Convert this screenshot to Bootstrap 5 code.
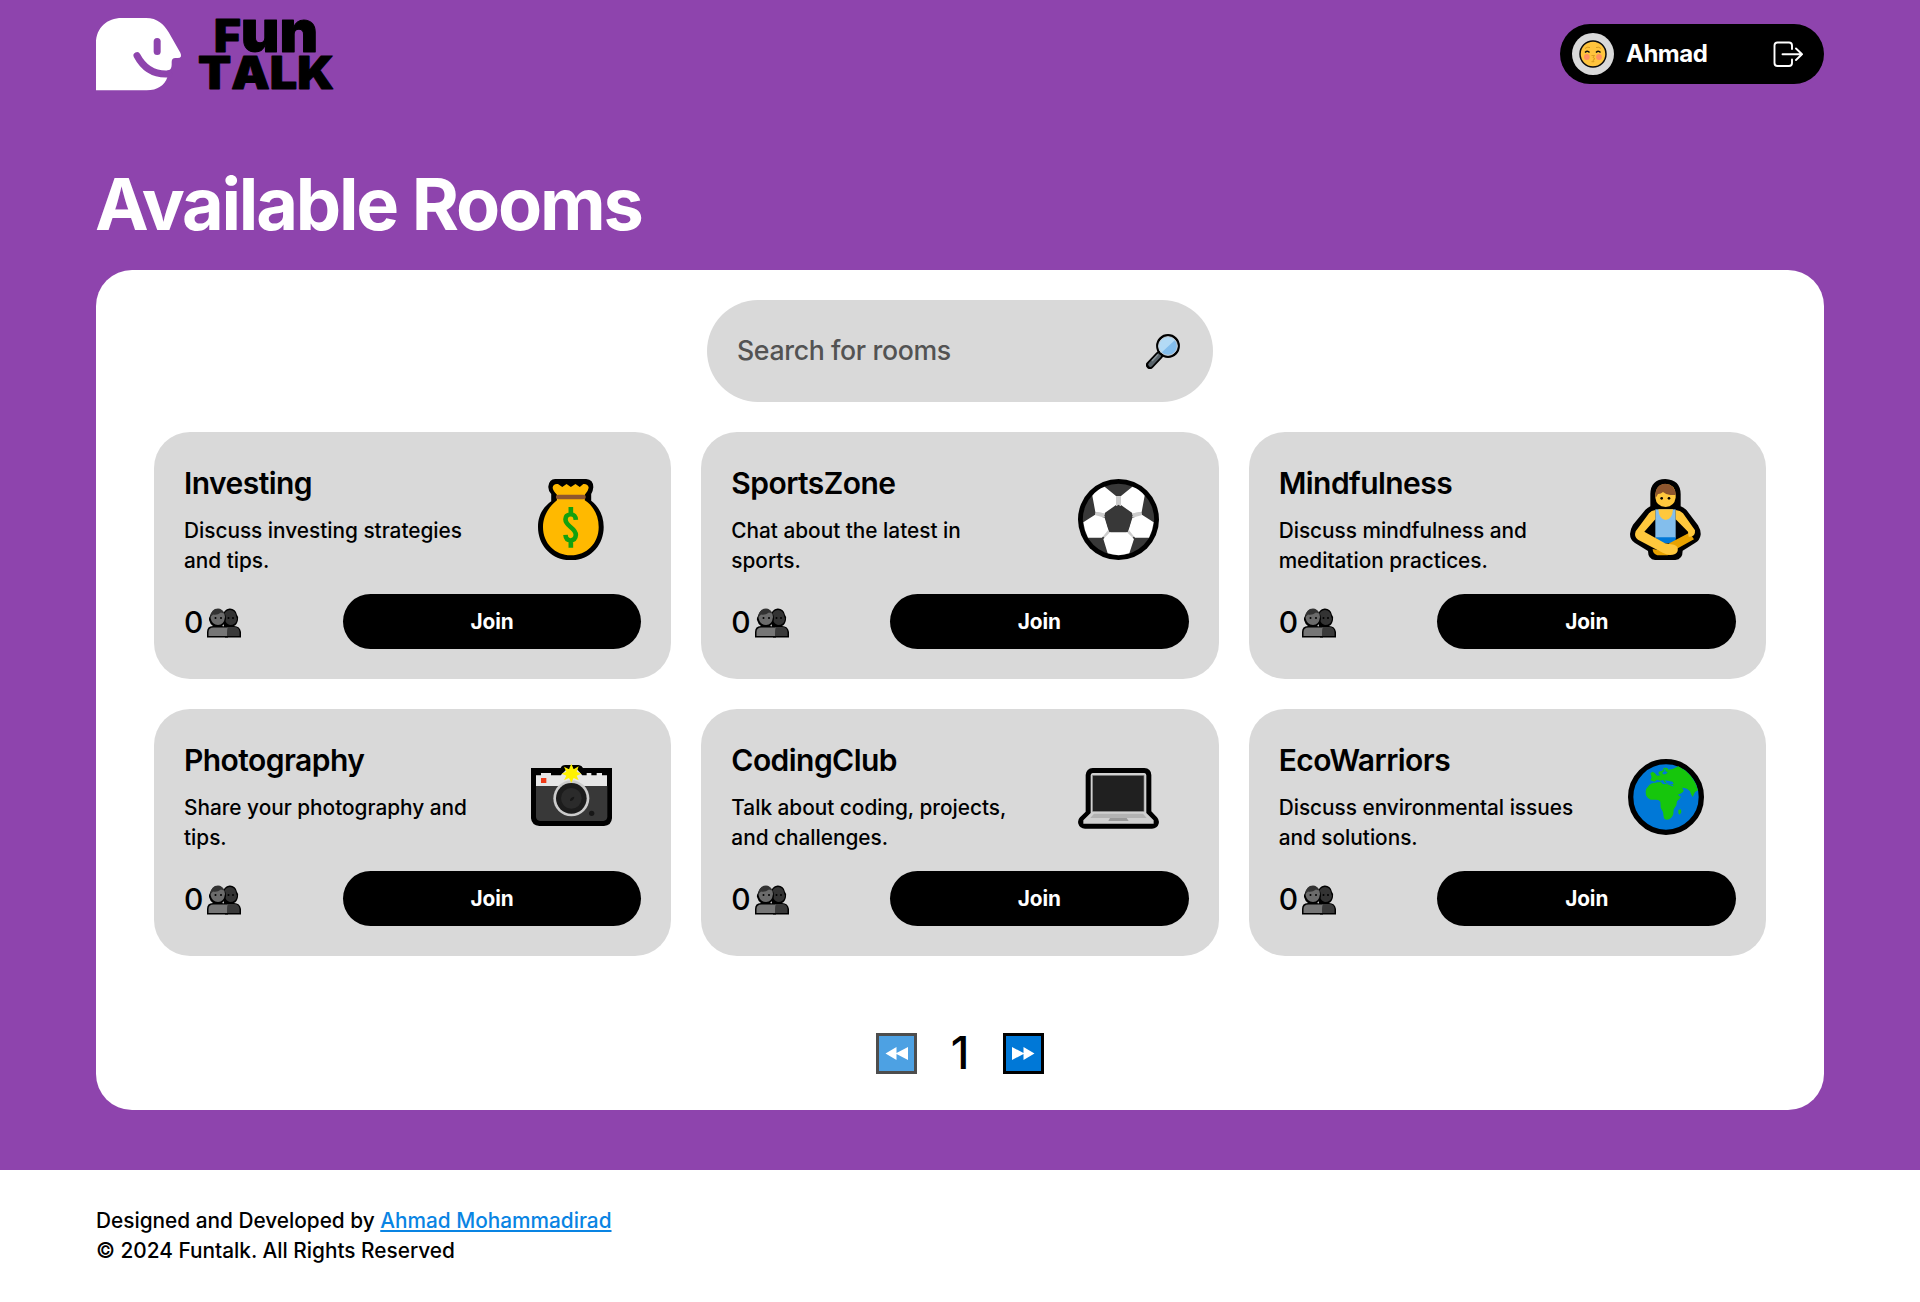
<!DOCTYPE html>
<html lang="en">
<head>
<meta charset="utf-8">
<meta name="viewport" content="width=device-width, initial-scale=1">
<title>Funtalk</title>
<link href="https://cdn.jsdelivr.net/npm/bootstrap@5.3.0/dist/css/bootstrap.min.css" rel="stylesheet">
<style>
body{font-family:Inter,"Liberation Sans",sans-serif;font-size:20.8px;font-weight:500;line-height:30px;color:#000;background:#fff}
.wrap{width:90%;margin:0 auto}
.stage{background:#8e44ad;height:1170px}
.topbar{height:108px}
.userpill{width:264px;height:60px;background:#000;color:#fff;padding:0 21px 0 12px;font-size:24px;font-weight:700;letter-spacing:-.5px}
.avatar{width:42px;height:42px;background:#d9d9d9}
.page-title{font-size:72px;font-weight:700;line-height:108px;color:#fff;margin:42px 0 12px;letter-spacing:-2.2px;text-indent:-1px}
.panel{height:840px;background:#fff;border-radius:36px;padding:30px 58px}
.searchbox{width:506px;height:101.67px;border-radius:51px;background:#d9d9d9;padding:0 33px 0 30px;margin:0 auto 30px}
.searchbox input{font-size:26.67px;font-weight:500;color:#000;line-height:40px;letter-spacing:-.36px;margin-bottom:2px}
.searchbox input::placeholder{color:#535353;opacity:1}
.searchbox svg{margin-top:2px}
.rooms{display:grid;grid-template-columns:repeat(3,1fr);gap:30px}
.room{background:#d9d9d9;border-radius:36px;padding:29px 30px 30px;height:247px}
.room h2{font-size:30px;font-weight:600;line-height:45px;margin:0 0 10px;letter-spacing:-.55px}
.room p{margin:0 0 18px;letter-spacing:-.01px}
.about{width:305px;margin-right:-5px}
.pic{width:140.6px;height:118px}
.count{font-size:30px;line-height:45px;padding-top:2px}
.joinbtn,.joinbtn:hover{width:298.6px;height:55px;background:#000;color:#fff;border:0;border-radius:28px;font-size:20.8px;font-weight:700;line-height:30px;padding-top:7px;letter-spacing:-.1px}
.pager{margin-top:62px;gap:35px;height:72px}
.pagenum{font-size:45px;line-height:68px;width:16px;margin-top:-2px}
.foot{padding-top:36px}
.foot a{color:#0984e3}
.wordmark{font-family:Inter,sans-serif;font-weight:900;font-size:134px;font-kerning:none}
svg{display:block;flex:none}
</style>
<script src="https://cdn.jsdelivr.net/npm/bootstrap@5.3.0/dist/js/bootstrap.bundle.min.js"></script>
</head>
<body>
<svg width="0" height="0" class="position-absolute" aria-hidden="true">
<symbol id="people" viewBox="0 0 34 31">
<path d="M16 9a7 7 0 0 1 14-1q2 2 1 5-1 5-4 6 6 0 7 6v5.500H18z" fill="#000"/>
<path d="M17 9a6 6 0 0 1 12 0l1 3q-1 6-7 6-4-1-5-5z" fill="#333"/>
<path d="M20 20h7q5 0 5.500 5v4H20z" fill="#3a3a3a"/>
<path d="M3 9a8 8 0 0 1 15-2q1 2 1 5-1 5-4 7 6 0 6 6v5.500H0V25q0-6 6-6-3-2-4-6-.5-2 1-4z" fill="#000"/>
<path d="M3.500 11Q4 2 11 2q6 0 7 8-1 8-7 8-6 0-7.500-7z" fill="#6b6b6b"/>
<path d="M3.500 10Q4 1.500 11 1.500q4 0 6 5l-3-1q-4 3-8 2z" fill="#333"/>
<path d="M1.500 29v-4q0-4.500 5-4.500h14V29z" fill="#767676"/>
<circle cx="8.500" cy="11" r="1" /><circle cx="14" cy="11" r="1"/><circle cx="21.500" cy="11" r="1"/><circle cx="26" cy="11" r="1"/>
</symbol>
</svg>

<div class="stage">
<div class="wrap">
<header class="topbar d-flex align-items-center justify-content-between">
<a href="#" class="text-decoration-none" aria-label="Fun Talk">
<svg width="238.670" height="72.670" viewBox="48 53 716 218" overflow="visible">
<path d="M48 270V128C48 82 82 53 125 53H198C232 53 252 72 266 96L301 157Q308 173 293 173H286Q275 173 275 185V193Q275 210 262 210V231C254 256 232 270 200 270Z" fill="#fff"/>
<path d="M171 166C190 202 222 224 266 221" fill="none" stroke="#8e44ad" stroke-width="21" stroke-linecap="round"/>
<rect x="221" y="113" width="21" height="51" rx="10.500" fill="#8e44ad"/>
<g class="wordmark" fill="#000" stroke="#000" stroke-width="3" stroke-linejoin="round">
<text x="402" y="156" textLength="313" lengthAdjust="spacingAndGlyphs">F<tspan font-size="174">un</tspan></text>
<text x="354" y="267" textLength="408" lengthAdjust="spacingAndGlyphs">TALK</text>
</g>
</svg>
</a>
<div class="userpill rounded-pill d-flex align-items-center">
<span class="avatar rounded-circle d-flex align-items-center justify-content-center me-2">
<svg width="28" height="28" viewBox="0 0 28 28"><circle cx="14" cy="14" r="13" fill="#ffc43d" stroke="#0b0b0b" stroke-width="1.500"/><circle cx="7.800" cy="17" r="2.900" fill="#ff9062"/><circle cx="20" cy="17" r="2.900" fill="#ff9062"/><path d="M6 12.500q2.500-2.500 4.500 0M17 12.500q2.500-2.500 4.500 0" fill="none" stroke="#111" stroke-width="1.400"/><path d="M6 8.500q2-2 5-1M22 8.500q-2-2-5-1M12.500 15.500h3l-1.500 2 2 1.200-2 1.500 1 1.500h-2.500" fill="none" stroke="#d99b22" stroke-width="1"/></svg>
</span>
<span class="ms-1">Ahmad</span>
<svg class="ms-auto" width="30" height="27" viewBox="0 0 30 27" fill="none" stroke="#fff" stroke-width="1.900" stroke-linecap="round" stroke-linejoin="round"><path d="M19 8V4.500Q19 1.500 16 1.500H4.500Q1.500 1.500 1.500 4.500V22Q1.500 25 4.500 25H16Q19 25 19 22V18.500M9.500 13.300H29M23 7.500L29 13.300L23 19"/></svg>
</div>
</header>
<h1 class="page-title">Available Rooms</h1>
<main class="panel">
<div class="searchbox d-flex align-items-center">
<input class="form-control border-0 bg-transparent p-0 shadow-none" type="text" placeholder="Search for rooms">
<svg width="34" height="35" viewBox="0 0 34 35"><path d="M4 31L13 21.500" stroke="#000" stroke-width="8" stroke-linecap="round"/><path d="M4.500 30.500L13 21.500" stroke="#576269" stroke-width="4.500" stroke-linecap="round"/><path d="M6 27L12 20.500" stroke="#879297" stroke-width="1.500"/><circle cx="22" cy="12" r="10.700" fill="#83bdec" stroke="#000" stroke-width="2.400"/><path d="M15 19A9.300 9.300 0 0 1 29 6Z" fill="#b3daf5"/><circle cx="22" cy="12" r="9.300" fill="none" stroke="#c9cdd0" stroke-width="1"/></svg>
</div>
<div class="rooms">
<section class="room">
<div class="d-flex justify-content-between"><div class="about"><h2>Investing</h2><p>Discuss investing strategies<br>and tips.</p></div>
<div class="pic d-flex align-items-center justify-content-center"><svg width="65.700" height="81.300" viewBox="1116 177 184 244" preserveAspectRatio="none"><path d="M1164 177H1251Q1271 178 1271 202Q1270 214 1265 222V242C1287 260 1300 288 1300 321C1300 378 1260 421 1208 421S1116 378 1116 321C1116 288 1128 264 1153 244V222Q1144 211 1145 199Q1147 178 1164 177Z"/><path d="M1157 203Q1159 190 1172 192L1184 201L1196 192L1208 201L1221 192L1233 201L1243 192Q1256 191 1258 203Q1256 215 1247 224V241C1272 258 1286 288 1286 321C1286 370 1252 406 1208 406S1130 370 1130 321C1130 288 1146 261 1169 241V224Q1158 212 1157 203Z" fill="#ffb900"/><rect x="1166" y="224" width="84" height="14" rx="7" fill="#8e562e"/><path d="M1222 300Q1221 282 1207 283Q1193 284 1193 298C1193 320 1222 323 1222 345Q1221 361 1207 361Q1194 361 1193 345M1208 261V284M1208 360V383" fill="none" stroke="#13a10e" stroke-width="13"/></svg></div></div>
<div class="d-flex align-items-center justify-content-between"><span class="count d-flex align-items-center">0<svg class="ms-1" width="34" height="31"><use href="#people"/></svg></span><button class="btn joinbtn" type="button">Join</button></div>
</section>
<section class="room">
<div class="d-flex justify-content-between"><div class="about"><h2>SportsZone</h2><p>Chat about the latest in<br>sports.</p></div>
<div class="pic d-flex align-items-center justify-content-center"><svg width="81" height="81" viewBox="54 57 243 243"><circle cx="175.500" cy="178.500" r="121.500"/><circle cx="175.500" cy="178.500" r="107" fill="#383838"/><path d="M168 108H183V138H168ZM106 156L135 158V172L104 170ZM245 156L216 158V172L247 170ZM144 207L153 220L137 237L125 226ZM207 207L198 220L214 237L226 226Z" fill="#ccc"/><path d="M97 107Q111 88 134 80L168 108V135L133 160L106 156ZM254 107Q240 88 217 80L183 108V135L218 160L245 156ZM70 187L104 165L134 173L145 209L126 233H84Q73 213 70 187ZM281 187L247 165L217 173L206 209L225 233H267Q278 213 281 187ZM150 217H201L222 237L208 280Q176 291 143 280L130 237Z" fill="#fff"/><path d="M175.500 134L218 165L203 216H148L133 165Z" fill="#383838"/></svg></div></div>
<div class="d-flex align-items-center justify-content-between"><span class="count d-flex align-items-center">0<svg class="ms-1" width="34" height="31"><use href="#people"/></svg></span><button class="btn joinbtn" type="button">Join</button></div>
</section>
<section class="room">
<div class="d-flex justify-content-between"><div class="about"><h2>Mindfulness</h2><p>Discuss mindfulness and<br>meditation practices.</p></div>
<div class="pic d-flex align-items-center justify-content-center"><svg width="71" height="81" viewBox="60 57 213 243"><path d="M121 102Q122 58 166 57Q211 59 212 102V139Q222 143 230 151L264 196Q273 211 272 224Q270 240 255 249L218 272Q218 298 196 300H135Q114 298 114 273L75 249Q60 240 60 222Q61 207 69 194L105 151Q111 144 121 139Z"/><path d="M136 109Q136 74 166 72Q196 73 197 104V113Q193 139 167 141Q139 139 136 113Z" fill="#ffc83d"/><path d="M136 107Q137 72 166 71Q197 74 197 105H181Q168 104 159 96Q153 102 144 102Q139 112 136 113Z" fill="#8e562e"/><circle cx="155" cy="115" r="4"/><circle cx="177" cy="115" r="4"/><path d="M136 148H197V235H136Z" fill="#83beec"/><path d="M145 148H189Q187 179 167 180Q147 178 145 148Z" fill="#ffc83d"/><path d="M136 232H197V250H152Z" fill="#0078d7"/><path d="M128 267L158 273L178 250L238 218L252 238L194 270Q187 285 172 286H142Q128 281 128 267Z" fill="#e8a200"/><path d="M136 150V178L103 215L165 250L192 254Q206 258 203 273Q199 285 180 285Q169 284 158 278L84 239Q71 231 77 214L117 160Q124 151 136 150ZM197 150V178L234 215L236 230Q257 232 255 211L219 160Q211 151 197 150Z" fill="#ffc83d"/></svg></div></div>
<div class="d-flex align-items-center justify-content-between"><span class="count d-flex align-items-center">0<svg class="ms-1" width="34" height="31"><use href="#people"/></svg></span><button class="btn joinbtn" type="button">Join</button></div>
</section>
<section class="room">
<div class="d-flex justify-content-between"><div class="about"><h2>Photography</h2><p>Share your photography and<br>tips.</p></div>
<div class="pic d-flex align-items-center justify-content-center"><svg class="mb-1" width="81" height="62" viewBox="62 75 243 186"><path d="M62 87H151Q154 78 165 78H205Q215 79 218 87H305V238Q303 260 281 261H87Q64 259 62 238Z"/><path d="M77 109H92V102H122V109H151L169 91H200L216 109H229V102H243V109H259V102H275V109H290V142H77Z" fill="#e6e6e6"/><path d="M77 141H291V234Q290 245 279 246H89Q78 245 77 234Z" fill="#383838"/><rect x="92" y="117" width="16" height="15" fill="#f03a17"/><circle cx="183" cy="178" r="54" fill="#ccc"/><circle cx="183" cy="178" r="46" fill="#1c1c1c"/><circle cx="183" cy="178" r="31" fill="#2b2b2b"/><path d="M179 186Q178 175 192 173Q191 185 179 186Z" fill="#171717"/><circle cx="244" cy="223" r="8" fill="#171717"/><path d="M183 74L190 91L205 82L199 98L213 104L199 110L205 124L190 117L183 131L176 117L161 124L168 110L154 104L168 98L161 83L176 91Z" fill="#fff100"/></svg></div></div>
<div class="d-flex align-items-center justify-content-between"><span class="count d-flex align-items-center">0<svg class="ms-1" width="34" height="31"><use href="#people"/></svg></span><button class="btn joinbtn" type="button">Join</button></div>
</section>
<section class="room">
<div class="d-flex justify-content-between"><div class="about"><h2>CodingClub</h2><p>Talk about coding, projects,<br>and challenges.</p></div>
<div class="pic d-flex align-items-center justify-content-center"><svg class="mt-1" width="81" height="61" viewBox="54 87 243 183"><path d="M98 87H253Q273 88 274 108V217L291 235Q299 244 296 254Q292 268 276 269H75Q59 268 55 254Q52 243 60 235L77 218V108Q79 88 98 87Z"/><path d="M98 102H253Q259 103 259 109V222L281 244V254H70V244L92 222V109Q92 103 98 102Z" fill="#d0d0d0"/><rect x="98" y="109" width="154" height="108" fill="#202020" stroke="#888" stroke-width="2"/><path d="M102 224H249L260 237H91Z" fill="#b3b3b3"/><path d="M150 237H200L206 246H145Z" fill="#999"/></svg></div></div>
<div class="d-flex align-items-center justify-content-between"><span class="count d-flex align-items-center">0<svg class="ms-1" width="34" height="31"><use href="#people"/></svg></span><button class="btn joinbtn" type="button">Join</button></div>
</section>
<section class="room">
<div class="d-flex justify-content-between"><div class="about"><h2>EcoWarriors</h2><p>Discuss environmental issues<br>and solutions.</p></div>
<div class="pic d-flex align-items-center justify-content-center"><svg width="76" height="76" viewBox="53 56 228 228"><circle cx="167" cy="170" r="106" fill="#0078d7" stroke="#000" stroke-width="16"/><path d="M106 154Q106 145 114 138Q119 129 131 128L151 124L158 132L169 131L187 138L196 142L202 157L206 167L212 169Q206 178 200 183L198 195L190 207L189 220Q185 237 169 238Q161 238 160 229L158 215L151 202L150 184Q146 177 135 178H121Q112 176 107 165ZM120 120L124 111L120 99L127 94L134 99L140 106L151 105L145 101V94L156 91L161 82L171 83L174 88L187 86L204 78Q250 101 263 150L254 155L247 170Q241 163 239 153L230 145L222 143L215 142L220 150L218 155L210 160L203 162L197 146L190 143L188 134L176 131L164 128L158 119L151 121L140 118L132 124ZM204 209L212 207L213 216L208 223L204 219Z" fill="#16c60c"/><path d="M157 95L163 93L160 88L166 86L165 93L172 96L166 102H157ZM163 120L174 121L187 124L190 131L180 132L168 128Z" fill="#0078d7"/></svg></div></div>
<div class="d-flex align-items-center justify-content-between"><span class="count d-flex align-items-center">0<svg class="ms-1" width="34" height="31"><use href="#people"/></svg></span><button class="btn joinbtn" type="button">Join</button></div>
</section>
</div>
<nav class="pager d-flex align-items-center justify-content-center" aria-label="Pages">
<svg width="41" height="41" viewBox="0 0 41 41"><path d="M0 0H41V41H0Z" fill="#4d4d4d"/><path d="M3 3H38V38H3Z" fill="#4da1e3"/><path d="M9.500 20.500L20.500 14V20L32 14V27L20.500 21V27Z" fill="#fff"/></svg>
<span class="pagenum d-flex justify-content-center">1</span>
<svg width="41" height="41" viewBox="0 0 41 41"><path d="M0 0H41V41H0Z"/><path d="M3 3H38V38H3Z" fill="#0078d7"/><path d="M31.500 20.500L20.500 14V20L9 14V27L20.500 21V27Z" fill="#fff"/></svg>
</nav>
</main>
</div>
</div>
<footer class="foot wrap">Designed and Developed by <a href="#">Ahmad Mohammadirad</a><br>© 2024 Funtalk. All Rights Reserved</footer>
</body>
</html>
